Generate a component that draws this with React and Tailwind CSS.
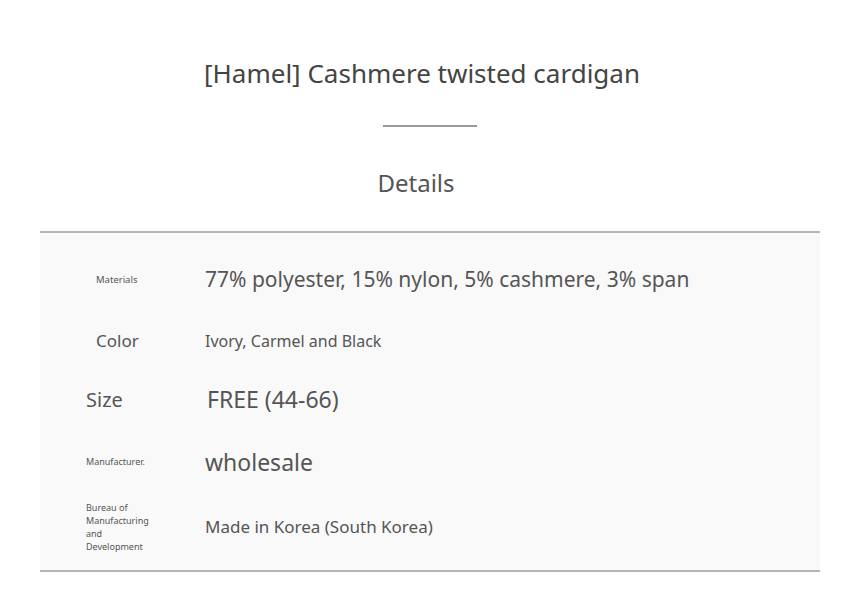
export default function App() {
  const font = { fontFamily: '"Noto Sans", "Liberation Sans", sans-serif' };
  return (
    <div className="min-h-screen bg-white text-[#555]" style={font}>
      <div className="flex flex-col items-center pt-[54px]">
        <h1 className="text-[26px] leading-[38px] text-[#444] pr-[16px]">[Hamel] Cashmere twisted cardigan</h1>
        <div className="mt-[33px] w-[94px] h-[2px] bg-[#9a9a9a]"></div>
        <h2 className="mt-[39px] text-[24px] leading-[34px] text-[#555] pr-[28px]">Details</h2>
      </div>
      <div className="mx-[40px] mt-[31px] border-t-2 border-b-2 border-[#b5b5b5] bg-[#f9f9f9] pt-[16px] pb-[12px]">
        <div className="flex items-center h-[62px]">
          <div className="w-[165px] pl-[56px] text-[9.5px] text-[#555]">Materials</div>
          <div className="text-[21px]">77% polyester, 15% nylon, 5% cashmere, 3% span</div>
        </div>
        <div className="flex items-center h-[59px]">
          <div className="w-[165px] pl-[56px] text-[17px] text-[#555]">Color</div>
          <div className="text-[16px]">Ivory, Carmel and Black</div>
        </div>
        <div className="flex items-center h-[59px]">
          <div className="w-[165px] pl-[46px] text-[20px] text-[#555]">Size</div>
          <div className="text-[23px] pl-[2px]">FREE (44-66)</div>
        </div>
        <div className="flex items-center h-[66px]">
          <div className="w-[165px] pl-[46px] text-[9px] text-[#555]">Manufacturer.</div>
          <div className="text-[23px]">wholesale</div>
        </div>
        <div className="flex items-center h-[63px]">
          <div className="w-[165px] pl-[46px] pr-[60px] text-[9px] leading-[13px] text-[#555]">
            Bureau of Manufacturing and Development
          </div>
          <div className="text-[17px]">Made in Korea (South Korea)</div>
        </div>
      </div>
    </div>
  );
}
